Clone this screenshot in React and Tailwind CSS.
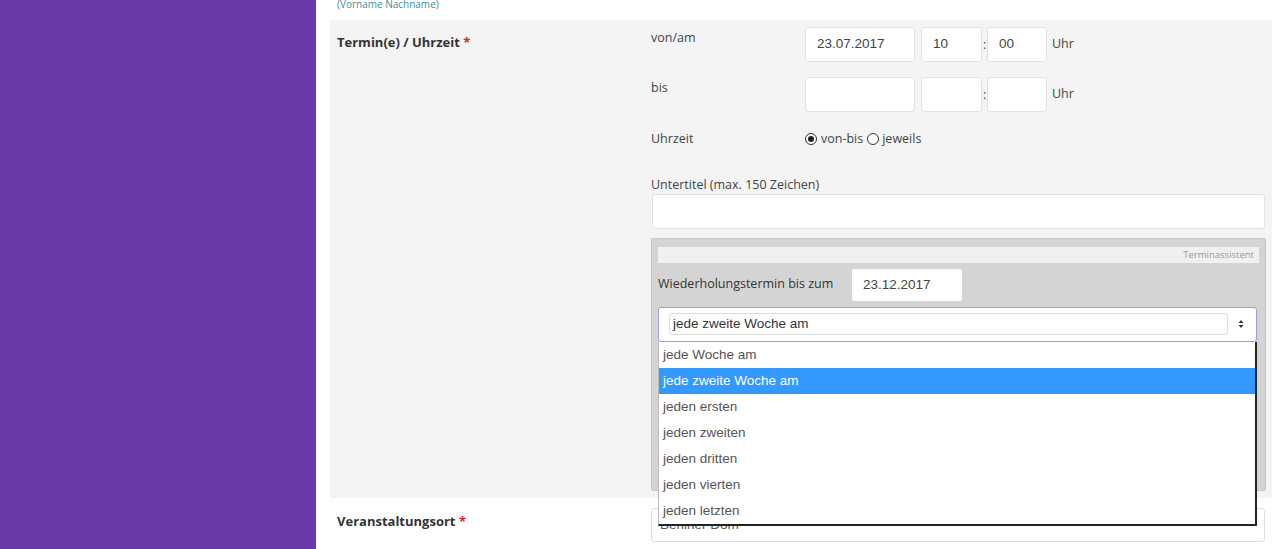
import React from "react";

const Radio = ({ checked }) => (
  <span className="inline-flex h-[12px] w-[12px] items-center justify-center rounded-full border border-[#333] bg-white">
    {checked && <span className="h-[6px] w-[6px] rounded-full bg-[#222]" />}
  </span>
);

const Input = ({ w, value, h = "h-[35px]" }) => (
  <div
    className={`${w} ${h} flex items-center rounded-[3px] border border-[#e2e2e2] bg-white pl-[11px] font-['Liberation_Sans',sans-serif] text-[13.5px] text-[#444]`}
  >
    {value}
  </div>
);

export default function App() {
  const options = [
    "jede Woche am",
    "jede zweite Woche am",
    "jeden ersten",
    "jeden zweiten",
    "jeden dritten",
    "jeden vierten",
    "jeden letzten",
  ];
  return (
    <div className="flex h-[549px] w-[1280px] overflow-hidden bg-white font-['Open_Sans',sans-serif] text-[#444]">
      <div className="w-[316px] shrink-0 bg-[#6a3aa9]" />
      <div className="flex w-[956px] flex-col pl-[14px]">
        <div className="h-[20px] overflow-hidden pl-[7px]">
          <div className="mt-[-3px] text-[10px] leading-[14px] text-[#3f8f95]">(Vorname Nachname)</div>
        </div>
        <div className="flex h-[478px] bg-[#f4f4f4]">
          <div className="w-[321px] shrink-0 pl-[7px] pt-[13px]">
            <div className="text-[13px] font-bold text-[#333]">
              Termin(e) / Uhrzeit <span className="text-[#e02020]">*</span>
            </div>
          </div>
          <div className="flex w-[614px] flex-col pt-[7px] text-[12.5px]">
            <div className="flex h-[35px]">
              <div className="w-[154px] pt-[2px]">von/am</div>
              <Input w="w-[110px]" value="23.07.2017" />
              <div className="w-[6px]" />
              <Input w="w-[61px]" value="10" />
              <div className="flex w-[5px] items-center justify-center text-[12px]">:</div>
              <Input w="w-[60px]" value="00" />
              <div className="flex items-center pl-[5px]">Uhr</div>
            </div>
            <div className="mt-[15px] flex h-[35px]">
              <div className="w-[154px] pt-[2px]">bis</div>
              <Input w="w-[110px]" value="" />
              <div className="w-[6px]" />
              <Input w="w-[61px]" value="" />
              <div className="flex w-[5px] items-center justify-center text-[12px]">:</div>
              <Input w="w-[60px]" value="" />
              <div className="flex items-center pl-[5px]">Uhr</div>
            </div>
            <div className="mt-[16px] flex h-[22px] items-center">
              <div className="w-[154px]">Uhrzeit</div>
              <Radio checked />
              <span className="ml-[4px] mr-[4px]">von-bis</span>
              <Radio />
              <span className="ml-[3px]">jeweils</span>
            </div>
            <div className="mt-[26px] text-[12.5px]">Untertitel (max. 150 Zeichen)</div>
            <div className="mt-[-1px] ml-[1px] h-[35px] w-[613px] rounded-[3px] border border-[#e2e2e2] bg-white" />
            <div className="mt-[9px] flex h-[253px] w-[615px] flex-col rounded-[2px] border border-[#c8c8c8] bg-[#d4d4d4] px-[6px] pt-[8px]">
              <div className="flex h-[16px] items-center justify-end bg-[#f0f0f0] pr-[5px] text-[9.5px] text-[#999]">
                Terminassistent
              </div>
              <div className="mt-[6px] flex h-[32px] items-center">
                <span className="w-[194px] text-[12.5px] text-[#333]">Wiederholungstermin bis zum</span>
                <div className="flex h-[32px] w-[110px] items-center rounded-[2px] bg-white pl-[11px] font-['Liberation_Sans',sans-serif] text-[13.5px] text-[#444]">
                  23.12.2017
                </div>
              </div>
              <div className="relative mt-[6px] h-[35px] w-[599px]">
                <div className="flex h-[35px] items-center rounded-[3px] border border-[#a99ad8] bg-white pl-[10px] pr-[10px]">
                  <div className="flex h-[22px] flex-1 items-center rounded-[3px] border border-[#ddd] pl-[3px] font-['Liberation_Sans',sans-serif] text-[13.5px] text-[#333]">
                    jede zweite Woche am
                  </div>
                  <div className="ml-[8px] flex w-[10px] flex-col items-center text-[#333]">
                    <svg width="6" height="10" viewBox="0 0 6 10">
                      <path d="M3 1 L5.5 4 L0.5 4 Z M3 9 L5.5 6 L0.5 6 Z" fill="#333" />
                    </svg>
                  </div>
                </div>
                <div className="absolute left-0 top-[35px] z-10 w-[599px] border-b-2 border-l border-r-2 border-b-[#222] border-l-[#bbb] border-r-[#222] bg-white font-['Liberation_Sans',sans-serif] text-[13.5px] text-[#555]">
                  {options.map((o, i) => (
                    <div
                      key={o}
                      className={`flex h-[26px] items-center pl-[4px] ${i === 1 ? "bg-[#3399ff] text-white" : ""}`}
                    >
                      {o}
                    </div>
                  ))}
                </div>
              </div>
            </div>
          </div>
        </div>
        <div className="flex pt-[10px]">
          <div className="w-[321px] shrink-0 pl-[7px] pt-[4px]">
            <div className="text-[13px] font-bold text-[#333]">
              Veranstaltungsort <span className="text-[#e02020]">*</span>
            </div>
          </div>
          <div className="flex h-[34px] w-[614px] items-center rounded-[3px] border border-[#ddd] bg-white pl-[8px] font-['Liberation_Sans',sans-serif] text-[13.5px] text-[#555]">
            Berliner Dom
          </div>
        </div>
      </div>
    </div>
  );
}
